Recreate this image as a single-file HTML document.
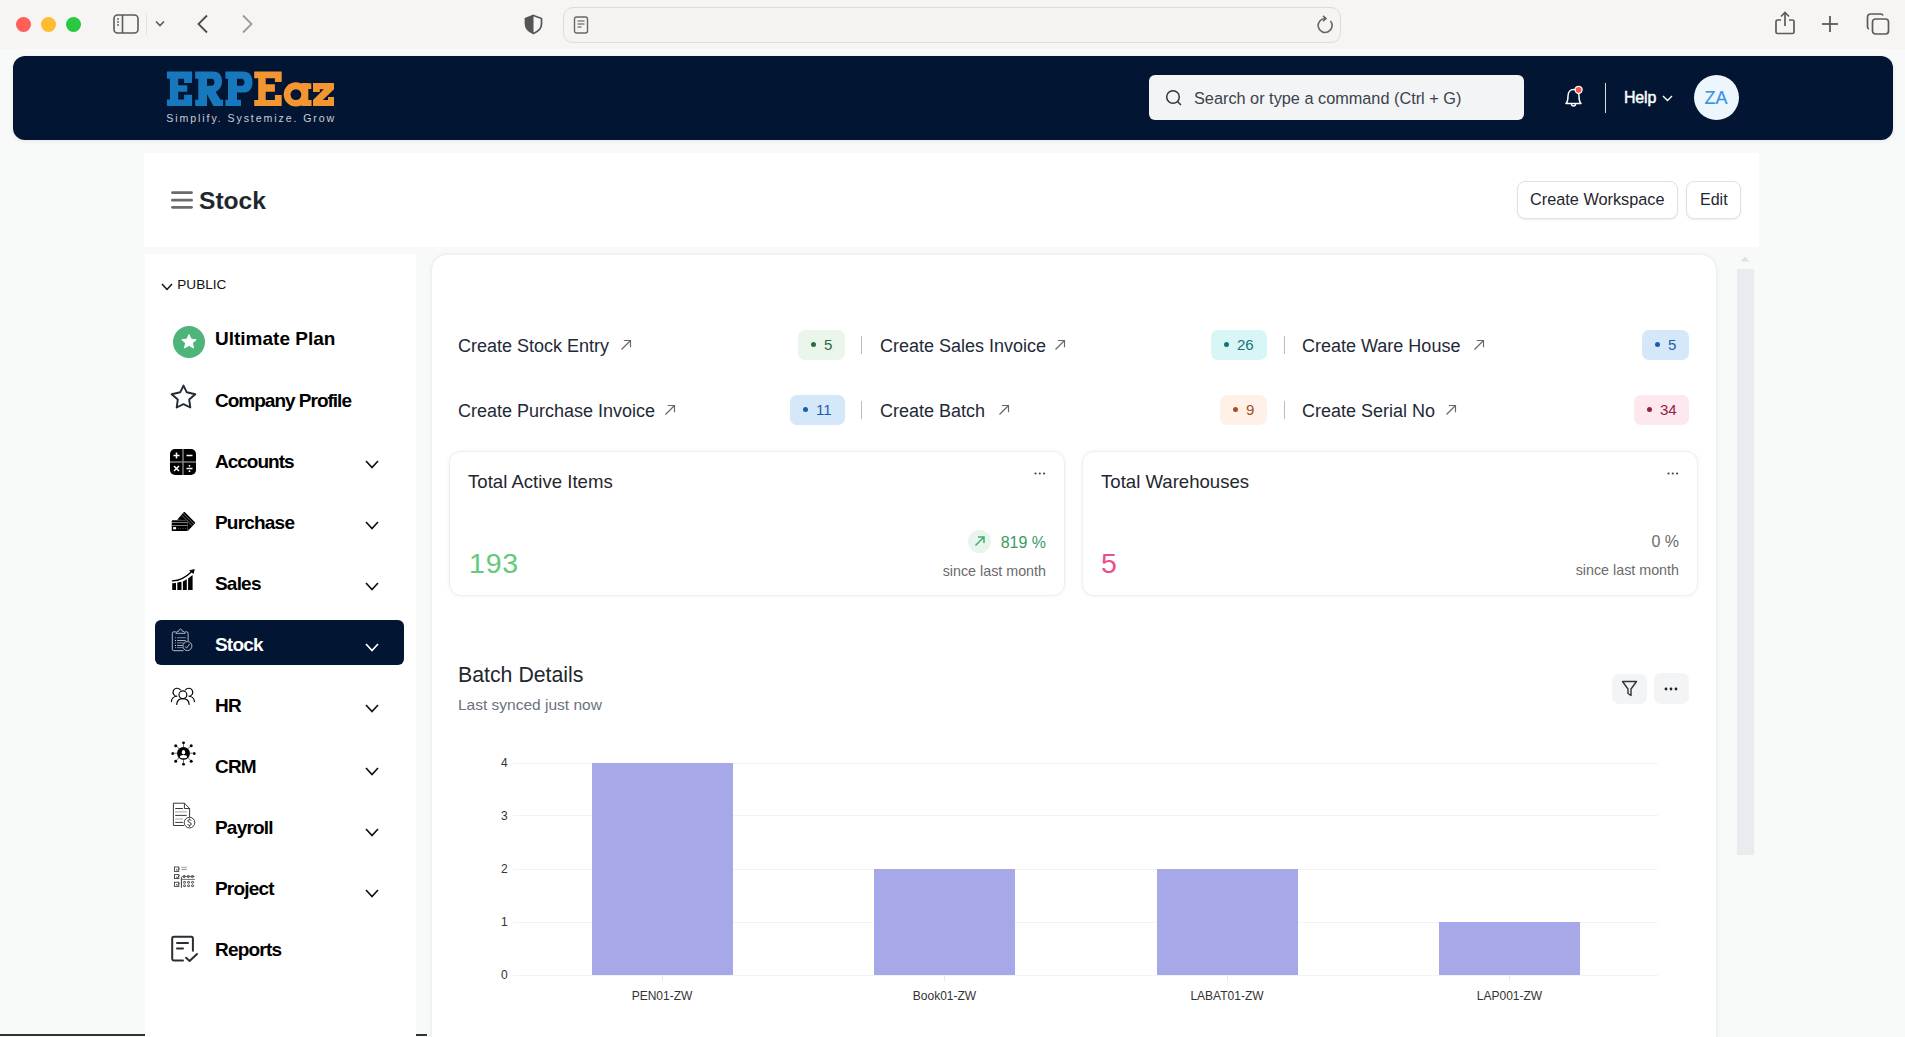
<!DOCTYPE html>
<html><head><meta charset="utf-8">
<style>
*{box-sizing:border-box;margin:0;padding:0}
html,body{width:1905px;height:1037px;overflow:hidden;background:#f8f9f9;font-family:"Liberation Sans",sans-serif;position:relative}
.a{position:absolute}
.t{position:absolute;line-height:1;white-space:nowrap}
svg{position:absolute;overflow:visible}
#toolbar{left:0;top:0;width:1905px;height:49px;background:#f6f5f3}
#tbstrip{left:0;top:49px;width:1905px;height:7px;background:#f7f7f6}
.tl{position:absolute;width:15px;height:15px;border-radius:50%;top:16.8px}
#addr{left:563px;top:7px;width:778px;height:36px;border:1.5px solid #dcdbd9;border-radius:10px;background:#f5f4f2}
#nav{left:13px;top:56px;width:1880px;height:84px;background:#021532;border-radius:12px;box-shadow:0 1px 4px rgba(0,0,0,.08)}
#search{left:1149px;top:75px;width:375px;height:45px;background:#f3f4f6;border-radius:6px}
#hdr{left:144px;top:153px;width:1615px;height:94px;background:#fff}
#side{left:145px;top:254px;width:271px;height:783px;background:#fff}
#main{left:431px;top:254px;width:1286px;height:800px;background:#fff;border:1px solid #edeff1;border-radius:16px;box-shadow:0 0 4px rgba(0,0,0,.05)}
.btn{position:absolute;background:#fff;border:1px solid #dfe1e3;border-radius:8px;box-shadow:0 1px 2px rgba(0,0,0,.08)}
.si{font-size:19px;font-weight:bold;color:#000;letter-spacing:-0.8px}
.chev{width:14px;height:9px}
.sc{font-size:18px;color:#1f2937}
.badge{position:absolute;height:30px;border-radius:7px}
.badge i{position:absolute;left:12.7px;top:12.3px;width:5px;height:5px;border-radius:50%}
.badge b{position:absolute;top:7px;font-weight:normal;font-size:15px;line-height:1}
.vdiv{position:absolute;width:1px;height:18px;background:#b8bcc2}
.card{position:absolute;top:450.6px;height:145px;background:#fff;border:1px solid #edeff1;border-radius:12px;box-shadow:0 0 4px rgba(0,0,0,.06)}
.ylab{font-size:12px;color:#333}
.grid{position:absolute;left:513px;width:1145px;height:1px;background:#f2f3f4}
.bar{position:absolute;background:#a6a8e8}
.xlab{font-size:12px;color:#333}
</style></head><body>
<div id="toolbar" class="a"></div>
<div class="tl" style="left:15.9px;background:#fe5f57"></div>
<div class="tl" style="left:41px;background:#febc2e"></div>
<div class="tl" style="left:66px;background:#28c840"></div>
<!-- sidebar toggle -->
<svg style="left:113px;top:14px" width="26" height="20" viewBox="0 0 26 20"><rect x="1" y="1" width="24" height="18" rx="3.5" fill="none" stroke="#5b5b5b" stroke-width="1.6"/><line x1="9.5" y1="1" x2="9.5" y2="19" stroke="#5b5b5b" stroke-width="1.6"/><circle cx="5" cy="5" r="0.9" fill="#5b5b5b"/><circle cx="5" cy="8" r="0.9" fill="#5b5b5b"/><circle cx="5" cy="11" r="0.9" fill="#5b5b5b"/></svg>
<div class="a" style="left:146px;top:14px;width:1px;height:21px;background:#e3e2e0"></div>
<svg style="left:155px;top:20px" width="10" height="7" viewBox="0 0 10 7"><polyline points="1,1.5 5,5.5 9,1.5" fill="none" stroke="#5b5b5b" stroke-width="1.6"/></svg>
<svg style="left:196px;top:14px" width="13" height="20" viewBox="0 0 13 20"><polyline points="11,1.5 2.5,10 11,18.5" fill="none" stroke="#4a4a4a" stroke-width="1.8"/></svg>
<svg style="left:241px;top:14px" width="13" height="20" viewBox="0 0 13 20"><polyline points="2,1.5 10.5,10 2,18.5" fill="none" stroke="#9a9a9a" stroke-width="1.8"/></svg>
<svg style="left:523px;top:14px" width="21" height="21" viewBox="0 0 21 21"><path d="M10.5 1.5 L18.5 4.5 V10 C18.5 14.5 15 17.5 10.5 19.5 C6 17.5 2.5 14.5 2.5 10 V4.5 Z" fill="none" stroke="#555" stroke-width="1.7"/><path d="M10.5 1.5 L2.5 4.5 V10 C2.5 14.5 6 17.5 10.5 19.5 Z" fill="#555"/></svg>
<div id="addr" class="a"></div>
<svg style="left:573px;top:16px" width="16" height="18" viewBox="0 0 16 18"><rect x="1.5" y="1" width="13" height="16" rx="2" fill="none" stroke="#666" stroke-width="1.4"/><line x1="4.5" y1="5" x2="11.5" y2="5" stroke="#666" stroke-width="1.2"/><line x1="4.5" y1="8" x2="11.5" y2="8" stroke="#666" stroke-width="1.2"/><line x1="4.5" y1="11" x2="8.5" y2="11" stroke="#666" stroke-width="1.2"/></svg>
<svg style="left:1316px;top:15px" width="19" height="20" viewBox="0 0 19 20"><path d="M14.5 6 A7 7 0 1 1 9.5 3.5" fill="none" stroke="#666" stroke-width="1.6"/><polyline points="7,0.8 10,3.5 7,6.2" fill="none" stroke="#666" stroke-width="1.6"/></svg>
<svg style="left:1774px;top:11px" width="22" height="24" viewBox="0 0 22 24"><path d="M7 9 H3.5 A1.5 1.5 0 0 0 2 10.5 V21 A1.5 1.5 0 0 0 3.5 22.5 H18.5 A1.5 1.5 0 0 0 20 21 V10.5 A1.5 1.5 0 0 0 18.5 9 H15" fill="none" stroke="#5b5b5b" stroke-width="1.7"/><line x1="11" y1="2" x2="11" y2="15" stroke="#5b5b5b" stroke-width="1.7"/><polyline points="7,5.5 11,1.5 15,5.5" fill="none" stroke="#5b5b5b" stroke-width="1.7"/></svg>
<svg style="left:1821px;top:15px" width="18" height="18" viewBox="0 0 18 18"><line x1="9" y1="1" x2="9" y2="17" stroke="#5b5b5b" stroke-width="1.8"/><line x1="1" y1="9" x2="17" y2="9" stroke="#5b5b5b" stroke-width="1.8"/></svg>
<svg style="left:1866px;top:13px" width="24" height="22" viewBox="0 0 24 22"><rect x="6.5" y="6" width="16" height="15" rx="3" fill="none" stroke="#5b5b5b" stroke-width="1.7"/><path d="M3 16 A2.5 2.5 0 0 1 1.5 14 V4 A3 3 0 0 1 4.5 1 H15 A2.5 2.5 0 0 1 17 2.5" fill="none" stroke="#5b5b5b" stroke-width="1.7"/></svg>

<div id="nav" class="a"></div>
<!-- logo -->
<svg style="left:0;top:0" width="400" height="140" viewBox="0 0 400 140">
<g fill="#1878be" fill-rule="evenodd">
<path d="M166.9,71.6 H192.1 V83 H184.1 V78.7 H178.2 V85.3 H187.2 V91.7 H178.2 V99.5 H184.1 V94.8 H192.1 V106.1 H166.9 V99.5 H169.9 V78.7 H166.9 Z"/>
<path d="M195.2,71.6 H213 C219.5,71.6 222,75.5 222,81.5 C222,86.5 219.5,89.5 215.7,92 L220.5,99.8 H223.1 V106.1 H213.4 L207,94.3 V106.1 H195.2 V99.8 H198.3 V78.7 H195.2 Z M207,78.7 H211.5 C213.5,78.7 214.5,80.3 214.5,82.3 C214.5,84.3 213.5,85.8 211.5,85.8 H207 Z"/>
<path d="M225.4,71.6 H243 C249,71.6 252.5,75.5 252.5,82.3 C252.5,89.3 249,92.6 243,92.6 H237 V99.8 H241 V106.1 H225.4 V99.8 H228 V78.7 H225.4 Z M237,78.7 H241.5 C243.5,78.7 244.5,80.5 244.5,82.3 C244.5,84.2 243.5,85.8 241.5,85.8 H237 Z"/>
</g>
<g fill="#f39531">
<path d="M254.2,71.5 H281.7 V82 H274.9 V78.2 H265.7 V84.2 H274.9 V91.7 H265.7 V99.9 H274.9 V94.9 H281.7 V106.1 H254.2 V99.9 H258.2 V78.2 H254.2 Z"/>
<circle cx="295.9" cy="94.4" r="12.2"/>
<path d="M301.4,83 H308.3 V83.2 H311.3 V88.9 H308.3 V99.9 H311.6 V106.1 H301.4 Z"/>
<path d="M313,83 H334 V89.2 L322.8,99.9 H328 V96.9 H334 V106.1 H313 V99.9 L323.8,89.2 H319.8 V91.9 H313 Z"/>
</g>
<circle cx="295.9" cy="94.6" r="5.4" fill="#021532"/>
</svg>
<div class="t" style="left:166.3px;top:113px;font-size:10.6px;letter-spacing:1.9px;color:#c9ced6">Simplify. Systemize. Grow</div>
<div id="search" class="a"></div>
<svg style="left:1165px;top:89px" width="18" height="18" viewBox="0 0 18 18"><circle cx="8" cy="8" r="6.3" fill="none" stroke="#2f3640" stroke-width="1.5"/><line x1="12.5" y1="12.5" x2="16" y2="16" stroke="#2f3640" stroke-width="1.5"/></svg>
<div class="t" style="left:1194px;top:89.5px;font-size:16.3px;color:#3b424b">Search or type a command (Ctrl + G)</div>
<svg style="left:1563px;top:85px" width="22" height="24" viewBox="0 0 22 24"><path d="M3 18.5 C5 16.5 5 14 5 11 C5 7 7.5 4.5 10.5 4.5 C13.5 4.5 16 7 16 11 C16 14 16 16.5 18 18.5 Z" fill="none" stroke="#fff" stroke-width="1.5" stroke-linejoin="round"/><path d="M8.5 19 A2 2 0 0 0 12.5 19" fill="none" stroke="#fff" stroke-width="1.5"/><circle cx="15.6" cy="4.8" r="3.5" fill="#f5524a" stroke="#fff" stroke-width="1.3"/></svg>
<div class="a" style="left:1605px;top:83px;width:1.3px;height:30px;background:#dcdcdc"></div>
<div class="t" style="left:1624px;top:90.1px;font-size:16px;font-weight:normal;-webkit-text-stroke:0.45px #fff;letter-spacing:-0.2px;color:#fff">Help</div>
<svg style="left:1662px;top:95px" width="11" height="7" viewBox="0 0 11 7"><polyline points="1,1 5.5,5.5 10,1" fill="none" stroke="#fff" stroke-width="1.4"/></svg>
<div class="a" style="left:1694px;top:75px;width:45px;height:45px;border-radius:50%;background:#eef6fd"></div>
<div class="t" style="left:1704.6px;top:88.8px;font-size:18px;-webkit-text-stroke:0.2px #3494e6;color:#3494e6">ZA</div>

<!-- header -->
<div id="hdr" class="a"></div>
<svg style="left:171px;top:191px" width="22" height="18" viewBox="0 0 22 18"><g stroke="#6b6b6b" stroke-width="2.8" stroke-linecap="round"><line x1="1.5" y1="1.7" x2="20.5" y2="1.7"/><line x1="1.5" y1="9.2" x2="20.5" y2="9.2"/><line x1="1.5" y1="16.3" x2="20.5" y2="16.3"/></g></svg>
<div class="t" style="left:199px;top:189.4px;font-size:24.6px;font-weight:bold;color:#1f272e">Stock</div>
<div class="btn" style="left:1517px;top:181px;width:161px;height:38px"></div>
<div class="t" style="left:1530px;top:191.3px;font-size:16.3px;color:#1f272e">Create Workspace</div>
<div class="btn" style="left:1686px;top:181px;width:55px;height:38px"></div>
<div class="t" style="left:1700px;top:191.5px;font-size:16px;color:#1f272e">Edit</div>

<!-- sidebar -->
<div id="side" class="a"></div>
<svg style="left:161px;top:282.5px" width="12" height="8" viewBox="0 0 12 8"><polyline points="1,1 6,6.5 11,1" fill="none" stroke="#111" stroke-width="1.5"/></svg>
<div class="t" style="left:177.3px;top:277.9px;font-size:13.6px;color:#111">PUBLIC</div>
<!-- active -->
<div class="a" style="left:155px;top:620px;width:249px;height:45px;border-radius:6px;background:#021532"></div>
<!-- icons -->
<svg style="left:173px;top:326px" width="32" height="32" viewBox="0 0 32 32"><circle cx="16" cy="16" r="16" fill="#4db47a"/><path d="M16 8.6 L18.2 13.2 L23.2 13.7 L19.4 17 L20.5 22 L16 19.4 L11.5 22 L12.6 17 L8.8 13.7 L13.8 13.2 Z" fill="#fff" stroke="#fff" stroke-width="1" stroke-linejoin="round"/></svg>
<svg style="left:169px;top:383px" width="29" height="27" viewBox="0 0 29 27"><path d="M14.5 2.6 L17.8 9.3 L26.3 11.2 L20.2 16.5 L21.3 24.5 L14.5 21.2 L7.7 24.5 L8.8 16.5 L2.7 11.2 L11.2 9.3 Z" fill="none" stroke="#222a33" stroke-width="1.9" stroke-linejoin="round"/></svg>
<svg style="left:170px;top:449px" width="26" height="26" viewBox="0 0 26 26"><rect x="0" y="0" width="26" height="26" rx="5" fill="#000"/><line x1="13" y1="0" x2="13" y2="26" stroke="#888" stroke-width="1.4"/><line x1="0" y1="13" x2="26" y2="13" stroke="#888" stroke-width="1.4"/><g stroke="#fff" stroke-width="1.5"><line x1="3.5" y1="6.5" x2="9.5" y2="6.5"/><line x1="6.5" y1="3.5" x2="6.5" y2="9.5"/><line x1="16.5" y1="6.5" x2="22.5" y2="6.5"/><line x1="4" y1="17" x2="9" y2="22"/><line x1="9" y1="17" x2="4" y2="22"/><line x1="16.5" y1="19.5" x2="22.5" y2="19.5"/></g><circle cx="19.5" cy="16.8" r="0.9" fill="#fff"/><circle cx="19.5" cy="22.2" r="0.9" fill="#fff"/></svg>
<svg style="left:165px;top:505px" width="40" height="35" viewBox="0 0 40 35"><path d="M12.2,14.8 L18.6,7.3 Q19.3,6.6 20,7.3 L29.9,17.2 Q30.5,17.9 29.9,18.6 L22.6,26.2 V15.2 Z" fill="#000"/><g stroke="#8a8a8a" stroke-width="0.8"><line x1="18.1" y1="8.3" x2="29" y2="19.2"/><line x1="16.4" y1="9.9" x2="27.3" y2="20.8"/></g><rect x="6.75" y="15.2" width="15.9" height="10.8" rx="0.8" fill="#000"/><rect x="6.75" y="17" width="15.9" height="0.8" fill="#9a9a9a"/><rect x="6.75" y="20" width="15.9" height="0.8" fill="#9a9a9a"/><rect x="8.1" y="22.1" width="3" height="2.2" fill="#fff"/><g fill="#aaa"><circle cx="13.4" cy="23.4" r="0.45"/><circle cx="15.6" cy="23.4" r="0.45"/><circle cx="18.2" cy="23.4" r="0.45"/><circle cx="20.5" cy="23.4" r="0.45"/></g></svg>
<svg style="left:165px;top:565px" width="35" height="30" viewBox="0 0 35 30"><g fill="#000"><path d="M7.2,18.3 L11,17.9 V24.9 H7.2 Z"/><path d="M12.3,17.4 L16.5,16.7 V24.9 H12.3 Z"/><path d="M17.9,16.4 L21.8,14.3 V24.9 H17.9 Z"/><path d="M23.1,13.6 L27.6,10.1 V24.9 H23.1 Z"/><polygon points="24,5.4 29.7,3.9 28.6,9.1"/></g><path d="M7.4,15.9 C13,15.7 20,13.2 26.2,7" fill="none" stroke="#000" stroke-width="1.35" stroke-linecap="round"/></svg>
<svg style="left:165px;top:622px" width="35" height="35" viewBox="0 0 35 35"><g fill="none" stroke="#c4cad3" stroke-width="0.9"><path d="M18.6,28.7 H8.8 A1.5,1.5 0 0 1 7.3,27.2 V11.3 A1.5,1.5 0 0 1 8.8,9.8 H10.8"/><path d="M20.2,9.8 H21.6 A1.5,1.5 0 0 1 23.1,11.3 V19"/><path d="M10.8,11.3 C11.3,9.8 12.3,9.2 13.8,9.2 C14.2,7.6 14.8,7 15.5,7 C16.2,7 16.8,7.6 17.2,9.2 C18.7,9.2 19.7,9.8 20.2,11.3 Z"/><circle cx="22.4" cy="24.1" r="4.5"/><polyline points="20,24.5 21.6,26 24.8,21.8"/></g><g stroke="#8a93a2" stroke-width="0.9"><line x1="12.1" y1="15.7" x2="20.8" y2="15.7"/><line x1="12.1" y1="18.5" x2="20.8" y2="18.5" stroke="#b9c0ca"/><line x1="12.1" y1="20.9" x2="18.5" y2="20.9"/><line x1="12.1" y1="23.5" x2="17.6" y2="23.5" stroke="#b9c0ca"/><line x1="12.1" y1="25.6" x2="17.6" y2="25.6"/></g><g fill="#d0d5dc"><rect x="10" y="15.2" width="1" height="1" opacity="0.6"/><rect x="10" y="18" width="1" height="1"/><rect x="10" y="20.4" width="1" height="1" opacity="0.6"/><rect x="10" y="23" width="1" height="1"/><rect x="10" y="25.1" width="1" height="1" opacity="0.6"/></g></svg>
<svg style="left:165px;top:680px" width="35" height="32" viewBox="0 0 35 32"><g fill="none" stroke="#000" stroke-width="1.15" stroke-linecap="round"><path d="M15.3,9.9 A4,4 0 1 0 12.3,16.2 C9,16.3 6.5,18.5 6.4,21.6"/><path d="M20.5,9.9 A4,4 0 1 1 23.5,16.2 C26.8,16.3 29.3,18.5 29.4,21.6"/><circle cx="17.9" cy="14.8" r="3.9"/><path d="M11.7,24.4 C12,20.5 14.5,18.6 17.9,18.6 C21.3,18.6 23.8,20.5 24.2,24.4"/></g></svg>
<svg style="left:171px;top:741px" width="26" height="25" viewBox="0 0 26 25"><g stroke="#333" stroke-width="0.7"><line x1="12.5" y1="1.5" x2="12.5" y2="23.5"/><line x1="1.5" y1="12.2" x2="23.5" y2="12.2"/><line x1="4.7" y1="4.4" x2="20.3" y2="20"/><line x1="20.3" y1="4.4" x2="4.7" y2="20"/></g><g fill="#000"><ellipse cx="12.5" cy="1.7" rx="1.5" ry="1.3"/><ellipse cx="12.5" cy="23.2" rx="1.5" ry="1.3"/><ellipse cx="1.7" cy="12.4" rx="1.3" ry="1.5"/><ellipse cx="23.3" cy="12.4" rx="1.3" ry="1.5"/><circle cx="4.7" cy="4.7" r="1.5"/><circle cx="20.2" cy="4.7" r="1.5"/><circle cx="4.7" cy="20.2" r="1.5"/><circle cx="20.2" cy="20.2" r="1.5"/><circle cx="12.5" cy="12.4" r="6.4"/></g><ellipse cx="12.5" cy="11.2" rx="1.7" ry="2.3" fill="#fff"/><ellipse cx="12.5" cy="15.7" rx="3.6" ry="1.6" fill="#fff"/></svg>
<svg style="left:168px;top:798px" width="32" height="34" viewBox="0 0 32 34"><g fill="none" stroke="#222" stroke-width="0.9"><path d="M16,27.5 H5.4 V5.2 H16.4 L21.6,10.5 V19.5"/><path d="M16.4,5.2 V10.5 H21.6"/></g><g stroke-width="0.9"><line x1="7.2" y1="10.5" x2="14.9" y2="10.5" stroke="#222"/><line x1="7.2" y1="13.9" x2="18.7" y2="13.9" stroke="#999"/><line x1="7.2" y1="17.4" x2="18.7" y2="17.4" stroke="#222"/><line x1="7.2" y1="21" x2="14.9" y2="21" stroke="#999"/><line x1="7.2" y1="24.4" x2="14.9" y2="24.4" stroke="#222"/></g><circle cx="21.5" cy="24.6" r="5.3" fill="#fff" stroke="#222" stroke-width="0.9"/><path d="M23.2,22.6 C22.9,21.9 22.3,21.7 21.5,21.7 C20.5,21.7 19.9,22.2 19.9,22.9 C19.9,24.6 23.2,24 23.2,26 C23.2,26.8 22.5,27.3 21.5,27.3 C20.6,27.3 20,27 19.7,26.3 M21.5,20.6 V21.7 M21.5,27.3 V28.5" fill="none" stroke="#111" stroke-width="0.9"/></svg>
<svg style="left:168px;top:860px" width="32" height="32" viewBox="0 0 32 32"><g fill="none" stroke="#333" stroke-width="0.85"><rect x="6.4" y="7" width="4.4" height="4.4"/><rect x="6.4" y="14.6" width="4.4" height="4"/><rect x="6.4" y="22.2" width="4.4" height="4.2"/><polyline points="8,9.3 9.3,10.5 11.6,8"/><polyline points="8,16.6 9.3,17.8 11.6,15.3"/><polyline points="8,24.2 9.3,25.4 11.6,22.9"/><line x1="13.3" y1="7.3" x2="18.8" y2="7.3" stroke="#888"/><line x1="13.3" y1="9.4" x2="18.8" y2="9.4" stroke="#777"/><line x1="13.4" y1="17.3" x2="13.4" y2="27.8" stroke="#222" stroke-width="0.9"/><line x1="13.4" y1="19.4" x2="26.9" y2="19.4" stroke="#555"/><path d="M13.4,17.3 C14,16.6 14.5,16.5 15,16.5 H26.5" stroke="#444" stroke-width="0.7"/><circle cx="16.2" cy="16.5" r="1.1"/><circle cx="20.4" cy="16.5" r="1.1"/><circle cx="24.4" cy="16.5" r="1.1"/><rect x="15.5" y="21.5" width="2.1" height="1.7" rx="0.6"/><rect x="15.5" y="24.9" width="2.1" height="1.7" rx="0.6"/><rect x="19.5" y="21.5" width="2.1" height="1.7" rx="0.6"/><rect x="19.5" y="24.9" width="2.1" height="1.7" rx="0.6"/><rect x="23.5" y="21.5" width="2.1" height="1.7" rx="0.6"/><rect x="23.5" y="24.9" width="2.1" height="1.7" rx="0.6"/></g></svg>
<svg style="left:171px;top:935px" width="28" height="28" viewBox="0 0 28 28"><g fill="none" stroke="#2a2f36" stroke-width="2" stroke-linecap="round" stroke-linejoin="round"><path d="M12 25.5 H3 A1.8 1.8 0 0 1 1.2 23.7 V3.5 A1.8 1.8 0 0 1 3 1.7 H20.3 A1.6 1.6 0 0 1 21.9 3.3 V15.7"/><line x1="6" y1="8.1" x2="17" y2="8.1"/><line x1="6" y1="13.4" x2="12" y2="13.4"/><polyline points="15.1,22.7 18.6,26 26,19"/></g></svg>
<!-- texts -->
<div class="t si" style="left:215px;top:328.7px;letter-spacing:0">Ultimate Plan</div>
<div class="t si" style="left:215px;top:390.5px;letter-spacing:-1px">Company Profile</div>
<div class="t si" style="left:215px;top:451.7px;letter-spacing:-1px">Accounts</div>
<div class="t si" style="left:215px;top:512.8px">Purchase</div>
<div class="t si" style="left:215px;top:573.6px">Sales</div>
<div class="t si" style="left:215px;top:634.8px;color:#fff">Stock</div>
<div class="t si" style="left:215px;top:696px">HR</div>
<div class="t si" style="left:215px;top:757px">CRM</div>
<div class="t si" style="left:215px;top:818.1px">Payroll</div>
<div class="t si" style="left:215px;top:878.9px">Project</div>
<div class="t si" style="left:215px;top:939.9px">Reports</div>
<!-- chevrons -->
<svg class="chev" style="left:365px;top:460px" viewBox="0 0 14 9"><polyline points="1,1 7,7.5 13,1" fill="none" stroke="#111" stroke-width="1.7"/></svg>
<svg class="chev" style="left:365px;top:521px" viewBox="0 0 14 9"><polyline points="1,1 7,7.5 13,1" fill="none" stroke="#111" stroke-width="1.7"/></svg>
<svg class="chev" style="left:365px;top:582px" viewBox="0 0 14 9"><polyline points="1,1 7,7.5 13,1" fill="none" stroke="#111" stroke-width="1.7"/></svg>
<svg class="chev" style="left:365px;top:643px" viewBox="0 0 14 9"><polyline points="1,1 7,7.5 13,1" fill="none" stroke="#fff" stroke-width="1.7"/></svg>
<svg class="chev" style="left:365px;top:704px" viewBox="0 0 14 9"><polyline points="1,1 7,7.5 13,1" fill="none" stroke="#111" stroke-width="1.7"/></svg>
<svg class="chev" style="left:365px;top:767px" viewBox="0 0 14 9"><polyline points="1,1 7,7.5 13,1" fill="none" stroke="#111" stroke-width="1.7"/></svg>
<svg class="chev" style="left:365px;top:828px" viewBox="0 0 14 9"><polyline points="1,1 7,7.5 13,1" fill="none" stroke="#111" stroke-width="1.7"/></svg>
<svg class="chev" style="left:365px;top:889px" viewBox="0 0 14 9"><polyline points="1,1 7,7.5 13,1" fill="none" stroke="#111" stroke-width="1.7"/></svg>

<!-- main -->
<div id="main" class="a"></div>
<!-- shortcuts -->
<div class="t sc" style="left:458px;top:337.3px">Create Stock Entry</div>
<div class="t sc" style="left:880px;top:337.3px">Create Sales Invoice</div>
<div class="t sc" style="left:1302px;top:337.3px">Create Ware House</div>
<div class="t sc" style="left:458px;top:402.3px">Create Purchase Invoice</div>
<div class="t sc" style="left:880px;top:402.3px">Create Batch</div>
<div class="t sc" style="left:1302px;top:402.3px">Create Serial No</div>
<svg class="arr" style="left:620px;top:339px" width="12" height="12" viewBox="0 0 12 12"><path d="M1.5 10.5 L10.5 1.5 M3.8 1.5 H10.5 V8.2" fill="none" stroke="#666" stroke-width="1.15"/></svg>
<svg class="arr" style="left:1054px;top:339px" width="12" height="12" viewBox="0 0 12 12"><path d="M1.5 10.5 L10.5 1.5 M3.8 1.5 H10.5 V8.2" fill="none" stroke="#666" stroke-width="1.15"/></svg>
<svg class="arr" style="left:1473px;top:339px" width="12" height="12" viewBox="0 0 12 12"><path d="M1.5 10.5 L10.5 1.5 M3.8 1.5 H10.5 V8.2" fill="none" stroke="#666" stroke-width="1.15"/></svg>
<svg class="arr" style="left:664px;top:404px" width="12" height="12" viewBox="0 0 12 12"><path d="M1.5 10.5 L10.5 1.5 M3.8 1.5 H10.5 V8.2" fill="none" stroke="#666" stroke-width="1.15"/></svg>
<svg class="arr" style="left:998px;top:404px" width="12" height="12" viewBox="0 0 12 12"><path d="M1.5 10.5 L10.5 1.5 M3.8 1.5 H10.5 V8.2" fill="none" stroke="#666" stroke-width="1.15"/></svg>
<svg class="arr" style="left:1445px;top:404px" width="12" height="12" viewBox="0 0 12 12"><path d="M1.5 10.5 L10.5 1.5 M3.8 1.5 H10.5 V8.2" fill="none" stroke="#666" stroke-width="1.15"/></svg>
<div class="badge" style="left:798px;top:330px;width:47px;background:#eaf5ec"><i style="background:#2d6a3f"></i><b style="left:26px;color:#2d6a3f">5</b></div>
<div class="badge" style="left:1211px;top:330px;width:56px;background:#d9f6f7"><i style="background:#16727a"></i><b style="left:26px;color:#16727a">26</b></div>
<div class="badge" style="left:1642px;top:330px;width:47px;background:#d5e8fa"><i style="background:#1a5fa8"></i><b style="left:26px;color:#1a5fa8">5</b></div>
<div class="badge" style="left:790px;top:395px;width:55px;background:#d5e8fa"><i style="background:#1a5fa8"></i><b style="left:26px;color:#1a5fa8">11</b></div>
<div class="badge" style="left:1220px;top:395px;width:47px;background:#fff1e8"><i style="background:#a34f2b"></i><b style="left:26px;color:#a34f2b">9</b></div>
<div class="badge" style="left:1634px;top:395px;width:55px;background:#fde8ee"><i style="background:#8f2344"></i><b style="left:26px;color:#8f2344">34</b></div>
<div class="vdiv" style="left:861px;top:335.5px"></div>
<div class="vdiv" style="left:1284px;top:335.5px"></div>
<div class="vdiv" style="left:861px;top:400.5px"></div>
<div class="vdiv" style="left:1284px;top:400.5px"></div>

<!-- cards -->
<div class="card" style="left:448.7px;width:616.5px"></div>
<div class="card" style="left:1081.8px;width:616px"></div>
<div class="t" style="left:468px;top:472.8px;font-size:18.6px;color:#1f272e">Total Active Items</div>
<div class="t" style="left:1101px;top:472.8px;font-size:18.6px;color:#1f272e">Total Warehouses</div>
<svg style="left:1034px;top:471.5px" width="12" height="3" viewBox="0 0 12 3"><g fill="#444"><circle cx="1.5" cy="1.5" r="1.1"/><circle cx="5.8" cy="1.5" r="1.1"/><circle cx="10.1" cy="1.5" r="1.1"/></g></svg>
<svg style="left:1667px;top:471.5px" width="12" height="3" viewBox="0 0 12 3"><g fill="#444"><circle cx="1.5" cy="1.5" r="1.1"/><circle cx="5.8" cy="1.5" r="1.1"/><circle cx="10.1" cy="1.5" r="1.1"/></g></svg>
<div class="t" style="left:469px;top:548.5px;font-size:28.5px;letter-spacing:0.8px;color:#63c97b">193</div>
<div class="t" style="left:1101px;top:548.5px;font-size:28.5px;color:#e9508a">5</div>
<div class="a" style="left:968px;top:530px;width:23px;height:23px;border-radius:50%;background:#e8f5ec"></div>
<svg style="left:974px;top:535px" width="12" height="12" viewBox="0 0 12 12"><path d="M1.5 10.5 L10 2 M4 2 H10 V8" fill="none" stroke="#3fae68" stroke-width="1.5"/></svg>
<div class="t" style="right:859px;top:535.3px;font-size:16px;color:#3c9a5f">819 %</div>
<div class="t" style="right:859px;top:564px;font-size:14.3px;color:#6b6b6b">since last month</div>
<div class="t" style="right:226px;top:534.3px;font-size:16px;color:#6b6b6b">0 %</div>
<div class="t" style="right:226px;top:563px;font-size:14.3px;color:#6b6b6b">since last month</div>

<!-- batch details -->
<div class="t" style="left:458px;top:665px;font-size:21.3px;color:#1f272e">Batch Details</div>
<div class="t" style="left:458px;top:697.4px;font-size:15.5px;color:#6b7280">Last synced just now</div>
<div class="a" style="left:1612px;top:674px;width:35px;height:30px;border-radius:7px;background:#f3f4f6"></div>
<div class="a" style="left:1654px;top:673px;width:35px;height:31px;border-radius:7px;background:#f3f4f6"></div>
<svg style="left:1621px;top:680px" width="17" height="17" viewBox="0 0 17 17"><path d="M1.5 1.5 H15.5 L10 9 V15.5 L7 13.5 V9 Z" fill="none" stroke="#333" stroke-width="1.4" stroke-linejoin="round"/></svg>
<svg style="left:1664px;top:687px" width="15" height="4" viewBox="0 0 15 4"><g fill="#222"><circle cx="2" cy="2" r="1.4"/><circle cx="7" cy="2" r="1.4"/><circle cx="12" cy="2" r="1.4"/></g></svg>

<!-- chart -->
<div class="grid" style="top:763px"></div>
<div class="grid" style="top:815px"></div>
<div class="grid" style="top:869px"></div>
<div class="grid" style="top:922px"></div>
<div class="grid" style="top:975px"></div>
<div class="t ylab" style="left:501px;top:756.5px">4</div>
<div class="t ylab" style="left:501px;top:809.5px">3</div>
<div class="t ylab" style="left:501px;top:862.5px">2</div>
<div class="t ylab" style="left:501px;top:915.5px">1</div>
<div class="t ylab" style="left:501px;top:969px">0</div>
<div class="bar" style="left:591.5px;top:763px;width:141px;height:212px"></div>
<div class="bar" style="left:874px;top:869px;width:141px;height:106px"></div>
<div class="bar" style="left:1157px;top:869px;width:141px;height:106px"></div>
<div class="bar" style="left:1439px;top:922px;width:141px;height:53px"></div>
<div class="a" style="left:661.5px;top:976px;width:1px;height:5px;background:#e8e8e8"></div><div class="a" style="left:944px;top:976px;width:1px;height:5px;background:#e8e8e8"></div><div class="a" style="left:1227px;top:976px;width:1px;height:5px;background:#e8e8e8"></div><div class="a" style="left:1509px;top:976px;width:1px;height:5px;background:#e8e8e8"></div>
<div class="t xlab" style="left:612px;width:100px;text-align:center;top:990px">PEN01-ZW</div>
<div class="t xlab" style="left:894.5px;width:100px;text-align:center;top:990px">Book01-ZW</div>
<div class="t xlab" style="left:1177px;width:100px;text-align:center;top:990px">LABAT01-ZW</div>
<div class="t xlab" style="left:1459.5px;width:100px;text-align:center;top:990px">LAP001-ZW</div>

<!-- scrollbar -->
<div class="a" style="left:1737px;top:269px;width:17px;height:586px;background:#e9ecef"></div>
<svg style="left:1739px;top:255px" width="12" height="8" viewBox="0 0 12 8"><polygon points="6,1.5 10.5,6.5 1.5,6.5" fill="#dee1e4"/></svg>
<div class="a" style="left:0;top:1034px;width:145px;height:2px;background:#333"></div>
<div class="a" style="left:416px;top:1034px;width:11px;height:2px;background:#333"></div>
</body></html>
